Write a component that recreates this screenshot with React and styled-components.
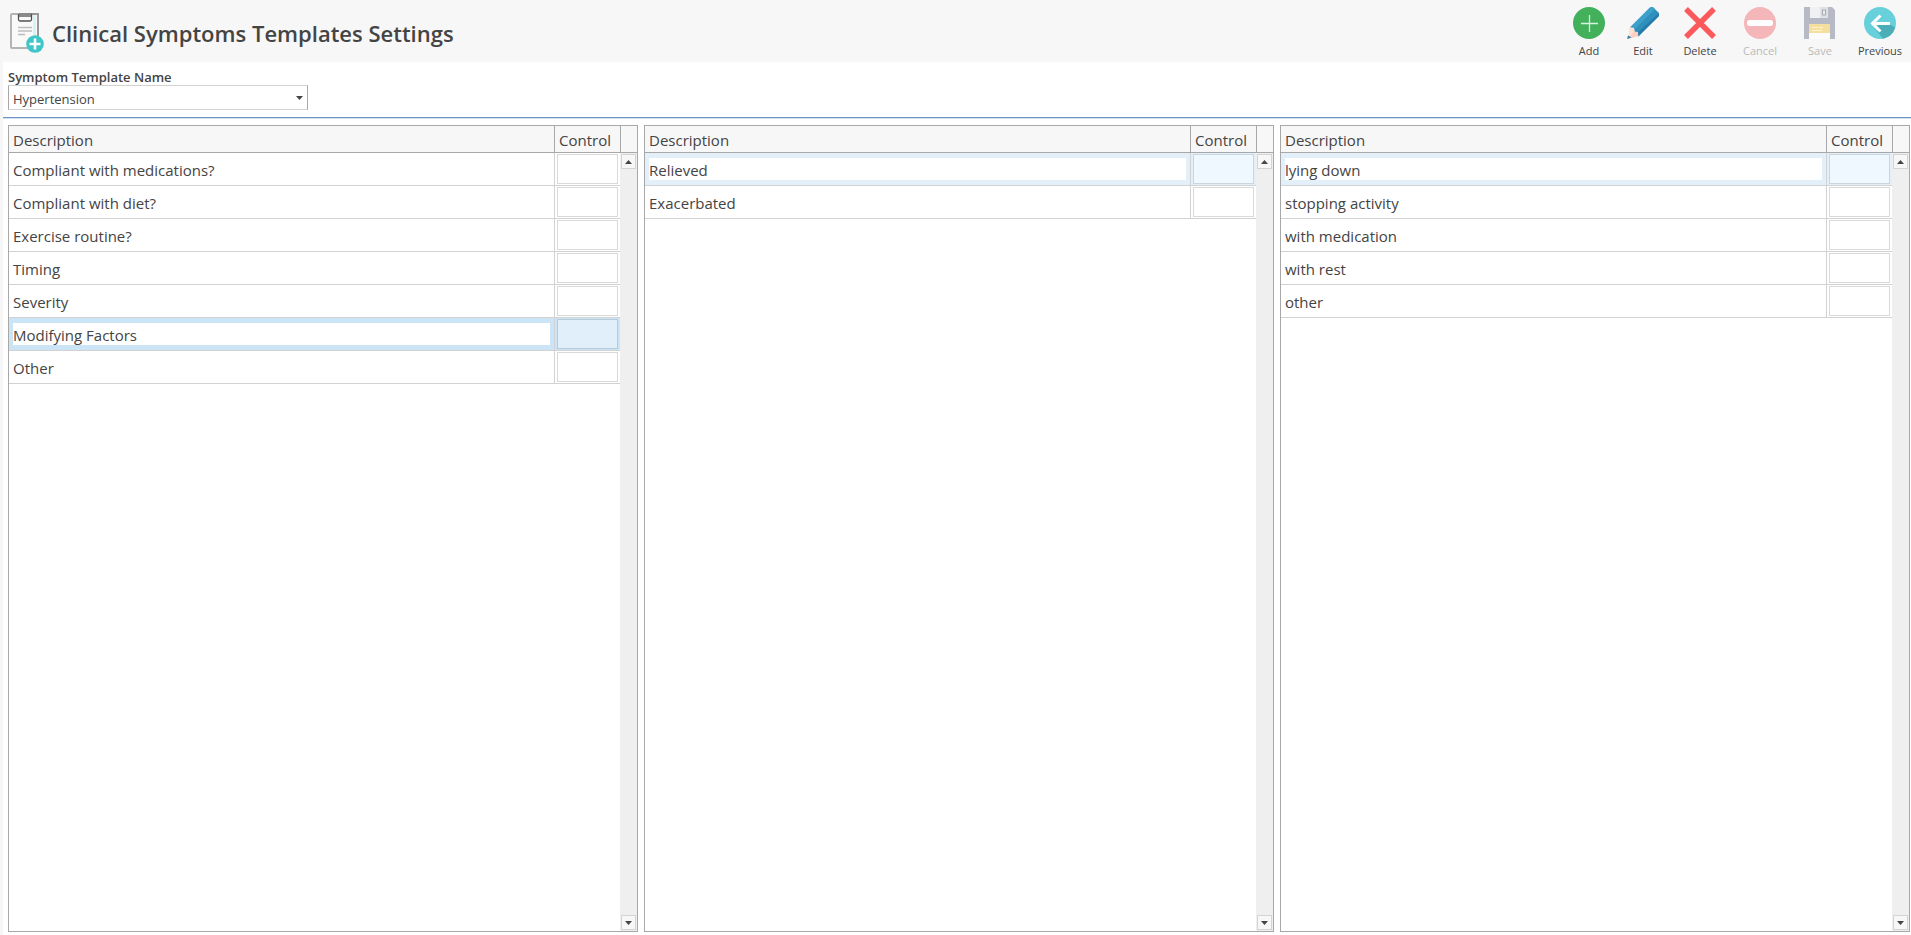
import { useState } from "react";
import styled, { createGlobalStyle } from "styled-components";

const colors = {
  chrome: "#f7f7f7",
  text: "#444444",
  border: "#a8a8a8",
  line: "#d2d2d2",
  accent: "#6c93c4",
};

const lists = [
  {
    id: "symptoms",
    selected: "Modifying Factors",
    focused: true,
    rows: [
      "Compliant with medications?",
      "Compliant with diet?",
      "Exercise routine?",
      "Timing",
      "Severity",
      "Modifying Factors",
      "Other",
    ],
  },
  { id: "factors", selected: "Relieved", rows: ["Relieved", "Exacerbated"] },
  {
    id: "options",
    selected: "lying down",
    rows: ["lying down", "stopping activity", "with medication", "with rest", "other"],
  },
];

const ClipboardIcon = () => (
  <svg width="34" height="40" viewBox="0 0 34 40" aria-hidden="true">
    <rect x="1" y="1" width="27" height="34" rx="1" fill="#f9f9f9" />
    <path d="M23 2h3v32h-3z" fill="#d5f4f4" />
    <path d="M28 1v34" stroke="#989898" strokeWidth="2" />
    <path d="M28 1H2a1 1 0 0 0-1 1v32a1 1 0 0 0 1 1h26" fill="none" stroke="#b4b4b4" strokeWidth="2" />
    <path d="M22 1h7" stroke="#989898" strokeWidth="2" />
    <path d="M9 0h13v4H9z" fill="#8a8a8a" />
    <path d="M8.500 1v5.500a1.500 1.500 0 0 0 1.500 1.500h10a1.500 1.500 0 0 0 1.500-1.500V1" fill="none" stroke="#505050" strokeWidth="1.300" />
    <path d="M8 14.500h14M8 18h14M8 21.500h7" stroke="#bdbdbd" strokeWidth="1.300" />
    <circle cx="25" cy="31" r="8.800" fill="#3fc6c8" />
    <path d="M25 25.500v11M19.500 31h11" stroke="#fff" strokeWidth="2.600" />
  </svg>
);

const AddIcon = () => (
  <svg width="32" height="32" viewBox="0 0 32 32" aria-hidden="true">
    <circle cx="16" cy="16" r="16" fill="#43b05c" />
    <path d="M16.500 8v17M8 16.500h17" stroke="#d6f2dc" strokeWidth="1.300" />
  </svg>
);

const EditIcon = () => (
  <svg width="32" height="32" viewBox="0 0 32 32" aria-hidden="true">
    <path d="M3 20.500 22.500 1Q24 -.300 26 .200L32 6v3L11 29z" fill="#2f8fbd" />
    <path d="M3 20.500 22.500 1Q24 -.300 26 .200L28 2 6.500 23.500z" fill="#3da0cb" />
    <path d="M32 6v3L11.500 29.500 9 27z" fill="#257cab" />
    <path d="M3 20.500 7 21l.500 3.500 3.500.500.300 4.200L1 32z" fill="#fbd0c3" />
    <path d="m3 20.500 4 .500.500 3.500L1 31z" fill="#fde0d6" />
    <path d="M1 28.500 0 32l4.500-1.500z" fill="#2f7fae" />
  </svg>
);

const DeleteIcon = () => (
  <svg width="32" height="32" viewBox="0 0 32 32" aria-hidden="true">
    <path d="m2 2 28 28M30 2 2 30" stroke="#fb5a5c" strokeWidth="5.400" />
  </svg>
);

const CancelIcon = () => (
  <svg width="32" height="32" viewBox="0 0 32 32" aria-hidden="true">
    <circle cx="16" cy="16" r="16" fill="#f4b6b8" />
    <rect x="3" y="13" width="26" height="6" rx="2.500" fill="#fff" />
  </svg>
);

const SaveIcon = () => (
  <svg width="32" height="32" viewBox="0 0 32 32" aria-hidden="true">
    <path d="M0 0h28l3 3v29H0z" fill="#b7bac4" />
    <path d="M6 0h18v11H6z" fill="#f0f1f3" />
    <path d="M16 0h8v11h-8z" fill="#dfe1e6" />
    <path d="M18.500 3h3v5h-3z" fill="#f0f1f3" stroke="#a9acb8" strokeWidth="1.200" />
    <path d="M5 17h21v9H5z" fill="#f5df9f" />
    <path d="M5 26h21v6H5z" fill="#fbfbfb" />
    <path d="M8 20.500h6M15 20.500h4M8 23.500h10" stroke="#fff4cf" strokeWidth="1.200" />
  </svg>
);

const PreviousIcon = () => (
  <svg width="32" height="32" viewBox="0 0 32 32" aria-hidden="true">
    <circle cx="16" cy="16" r="16" fill="#68d0da" />
    <path d="M26 17.500 31.200 20.500A16 16 0 0 1 19 31.700L9 19l7-1z" fill="#4aadb8" />
    <path d="M8 16.500h18M16.500 8.500l-8 8 8 8" fill="none" stroke="#fff" strokeWidth="3" />
  </svg>
);

const Arrow = ({ up }) => (
  <svg width="7" height="4" viewBox="0 0 7 4" aria-hidden="true">
    <path d={up ? "M0 4 3.500 0 7 4z" : "M0 0h7L3.500 4z"} fill="#444" />
  </svg>
);

const actions = [
  { label: "Add", icon: AddIcon, width: 54 },
  { label: "Edit", icon: EditIcon, width: 54 },
  { label: "Delete", icon: DeleteIcon, width: 60 },
  { label: "Cancel", icon: CancelIcon, width: 60, disabled: true },
  { label: "Save", icon: SaveIcon, width: 60, disabled: true },
  { label: "Previous", icon: PreviousIcon, width: 60 },
];

const SymptomList = ({ list }) => {
  const [selected, setSelected] = useState(list.selected);

  return (
    <Panel>
      <Table>
        <thead>
          <tr>
            <HeadCell scope="col">Description</HeadCell>
            <HeadCell scope="col" $control>Control</HeadCell>
          </tr>
        </thead>
        <tbody>
          {list.rows.map((row) => (
            <Row
              key={row}
              $selected={row === selected}
              $focused={list.focused}
              onClick={() => setSelected(row)}
            >
              <Cell>
                <Description>{row}</Description>
              </Cell>
              <Cell $control>
                <ControlBox type="text" readOnly aria-label={`Control for ${row}`} />
              </Cell>
            </Row>
          ))}
        </tbody>
      </Table>
      <Side>
        <SideHead />
        <ScrollTrack>
          <ScrollButton type="button" aria-label="Scroll up"><Arrow up /></ScrollButton>
          <ScrollButton type="button" aria-label="Scroll down"><Arrow /></ScrollButton>
        </ScrollTrack>
      </Side>
    </Panel>
  );
};

const App = () => {
  return (
    <>
      <GlobalStyle />
      <Page>
        <Header>
          <ClipboardIcon />
          <Title>Clinical Symptoms Templates Settings</Title>
          <Toolbar>
            {actions.map(({ label, icon: Icon, width, disabled }) => (
              <ToolButton key={label} type="button" disabled={disabled} $width={width}>
                <Icon />
                {label}
              </ToolButton>
            ))}
          </Toolbar>
        </Header>
        <Content>
          <TemplateField>
            <Label htmlFor="template">Symptom Template Name</Label>
            <SelectWrap>
              <Select id="template" defaultValue="Hypertension">
                <option>Hypertension</option>
              </Select>
              <Arrow />
            </SelectWrap>
          </TemplateField>
          <Lists>
            {lists.map((list) => (
              <SymptomList key={list.id} list={list} />
            ))}
          </Lists>
        </Content>
      </Page>
    </>
  );
};

const GlobalStyle = createGlobalStyle`
  * {
    box-sizing: border-box;
  }
  body {
    margin: 0;
    color: ${colors.text};
    background: ${colors.chrome};
    font-family: "Open Sans", "Noto Sans", sans-serif;
  }
  button, input, select {
    font-family: inherit;
    color: inherit;
  }
  svg {
    display: block;
    flex-shrink: 0;
  }
`;

const Page = styled.div`
  display: flex;
  flex-direction: column;
  min-height: 100vh;
`;

const Header = styled.header`
  display: flex;
  align-items: center;
  height: 62px;
  padding: 4px 1px 0 10px;
  background: ${colors.chrome};
`;

const Title = styled.h1`
  flex: 1;
  margin: 0 0 0 8px;
  font-size: 22px;
  line-height: 32px;
  font-weight: 600;
`;

const Toolbar = styled.div`
  display: flex;
`;

const ToolButton = styled.button`
  display: flex;
  flex-direction: column;
  align-items: center;
  gap: 4px;
  width: ${(props) => props.$width}px;
  padding: 0;
  border: 0;
  background: none;
  font-size: 11px;
  line-height: 16px;
  &:disabled {
    color: #b9b9b9;
  }
`;

const Content = styled.main`
  flex: 1;
  display: flex;
  flex-direction: column;
  margin-left: 3px;
  background: #fff;
`;

const TemplateField = styled.div`
  padding: 7px 5px;
  border-bottom: 1px solid ${colors.accent};
  box-shadow: 0 1px 0 #d3e1f2;
`;

const Label = styled.label`
  display: block;
  font-size: 13px;
  line-height: 16px;
  font-weight: 600;
`;

const SelectWrap = styled.div`
  display: flex;
  align-items: center;
  width: 300px;
  height: 25px;
  border: 1px solid ${colors.border};
  border-top-color: ${colors.line};
  border-bottom-color: ${colors.line};
  padding-right: 4px;
`;

const Select = styled.select`
  flex: 1;
  height: 23px;
  padding: 2px 4px 0;
  border: 0;
  appearance: none;
  background: none;
  font-size: 13px;
  line-height: 18px;
`;

const Lists = styled.div`
  flex: 1;
  display: grid;
  grid-template-columns: repeat(3, 1fr);
  gap: 6px;
  padding: 7px 1px 3px 5px;
`;

const Panel = styled.section`
  display: flex;
  align-items: stretch;
  border: 1px solid ${colors.border};
  background: #fff;
`;

const Table = styled.table`
  flex: 1;
  align-self: flex-start;
  border-collapse: separate;
  border-spacing: 0;
  table-layout: fixed;
  font-size: 15px;
  line-height: 24px;
`;

const HeadCell = styled.th`
  width: ${(props) => (props.$control ? "66px" : "auto")};
  height: 27px;
  padding: 1px 4px 0;
  border-bottom: 1px solid ${colors.border};
  border-left: ${(props) => (props.$control ? `1px solid ${colors.border}` : "0")};
  background: ${colors.chrome};
  font-weight: 400;
  text-align: left;
`;

const Cell = styled.td`
  height: 33px;
  padding: ${(props) => (props.$control ? "1px 2px" : "0 4px")};
  border-bottom: 1px solid ${colors.line};
  border-left: ${(props) => (props.$control ? `1px solid ${colors.line}` : "0")};
`;

const Description = styled.div`
  height: 22px;
  background: #fff;
`;

const ControlBox = styled.input`
  display: block;
  width: 100%;
  height: 30px;
  border: 1px solid #d9d9d9;
  background: #fff;
`;

const Row = styled.tr`
  background: ${(props) => {
    if (!props.$selected) return "#fff";
    return props.$focused ? "#cbe5f6" : "#e3f0fa";
  }};
  ${ControlBox} {
    background: ${(props) => {
      if (!props.$selected) return "#fff";
      return props.$focused ? "#e1effb" : "#eff7ff";
    }};
    border-color: ${(props) => {
      if (!props.$selected) return "#d9d9d9";
      return props.$focused ? "#b7cad9" : "#c9d5df";
    }};
  }
`;

const Side = styled.div`
  display: flex;
  flex-direction: column;
  width: 17px;
`;

const SideHead = styled.div`
  height: 27px;
  border-left: 1px solid ${colors.border};
  border-bottom: 1px solid ${colors.border};
  background: ${colors.chrome};
`;

const ScrollTrack = styled.div`
  flex: 1;
  display: flex;
  flex-direction: column;
  justify-content: space-between;
  padding: 1px;
  background: #efefef;
`;

const ScrollButton = styled.button`
  display: flex;
  align-items: center;
  justify-content: center;
  width: 15px;
  height: 15px;
  padding: 0;
  border: 1px solid #d4d4d4;
  background: ${colors.chrome};
`;

export default App;
